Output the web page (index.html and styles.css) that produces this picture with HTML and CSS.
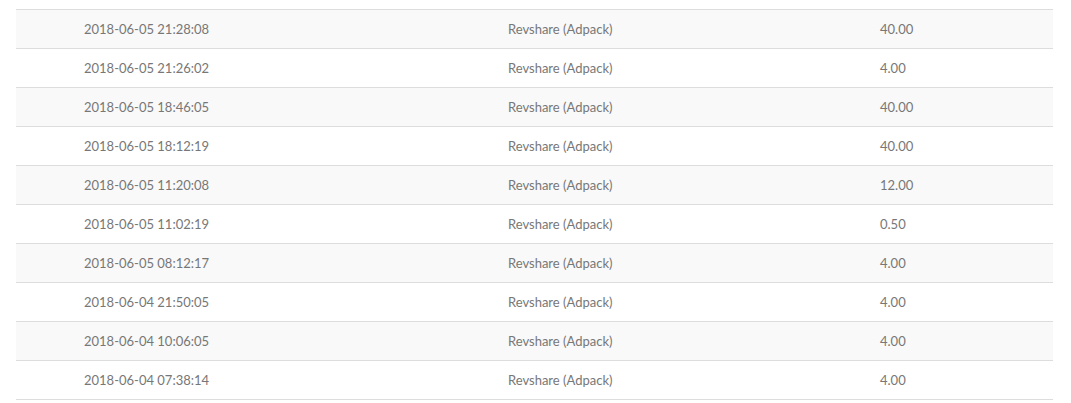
FILE: index.html
```html
<!DOCTYPE html>
<html>
<head>
<meta charset="utf-8">
<link rel="stylesheet" href="styles.css">
</head>
<body>
<div class="table">
  <div class="row"><div class="cell c1">2018-06-05 21:28:08</div><div class="cell c2">Revshare (Adpack)</div><div class="cell c3">40.00</div></div>
  <div class="row"><div class="cell c1">2018-06-05 21:26:02</div><div class="cell c2">Revshare (Adpack)</div><div class="cell c3">4.00</div></div>
  <div class="row"><div class="cell c1">2018-06-05 18:46:05</div><div class="cell c2">Revshare (Adpack)</div><div class="cell c3">40.00</div></div>
  <div class="row"><div class="cell c1">2018-06-05 18:12:19</div><div class="cell c2">Revshare (Adpack)</div><div class="cell c3">40.00</div></div>
  <div class="row"><div class="cell c1">2018-06-05 11:20:08</div><div class="cell c2">Revshare (Adpack)</div><div class="cell c3">12.00</div></div>
  <div class="row"><div class="cell c1">2018-06-05 11:02:19</div><div class="cell c2">Revshare (Adpack)</div><div class="cell c3">0.50</div></div>
  <div class="row"><div class="cell c1">2018-06-05 08:12:17</div><div class="cell c2">Revshare (Adpack)</div><div class="cell c3">4.00</div></div>
  <div class="row"><div class="cell c1">2018-06-04 21:50:05</div><div class="cell c2">Revshare (Adpack)</div><div class="cell c3">4.00</div></div>
  <div class="row"><div class="cell c1">2018-06-04 10:06:05</div><div class="cell c2">Revshare (Adpack)</div><div class="cell c3">4.00</div></div>
  <div class="row last"><div class="cell c1">2018-06-04 07:38:14</div><div class="cell c2">Revshare (Adpack)</div><div class="cell c3">4.00</div></div>
</div>
</body>
</html>
```
FILE: styles.css
```css
html, body {
  margin: 0;
  background: #fff;
}
body {
  padding: 9px 18px 0 16px;
  font-family: Lato, "Open Sans", sans-serif;
  font-size: 13px;
  color: #777;
}
.table {
  width: 1037px;
}
.row {
  display: grid;
  grid-template-columns: 424px 372px 1fr;
  height: 38px;
  border-top: 1px solid #ddd;
  align-items: center;
}
.row:nth-child(odd) {
  background: #f9f9f9;
}
.row.last {
  border-bottom: 1px solid #ddd;
}
.cell {
  padding-left: 68px;
  white-space: nowrap;
}
```
